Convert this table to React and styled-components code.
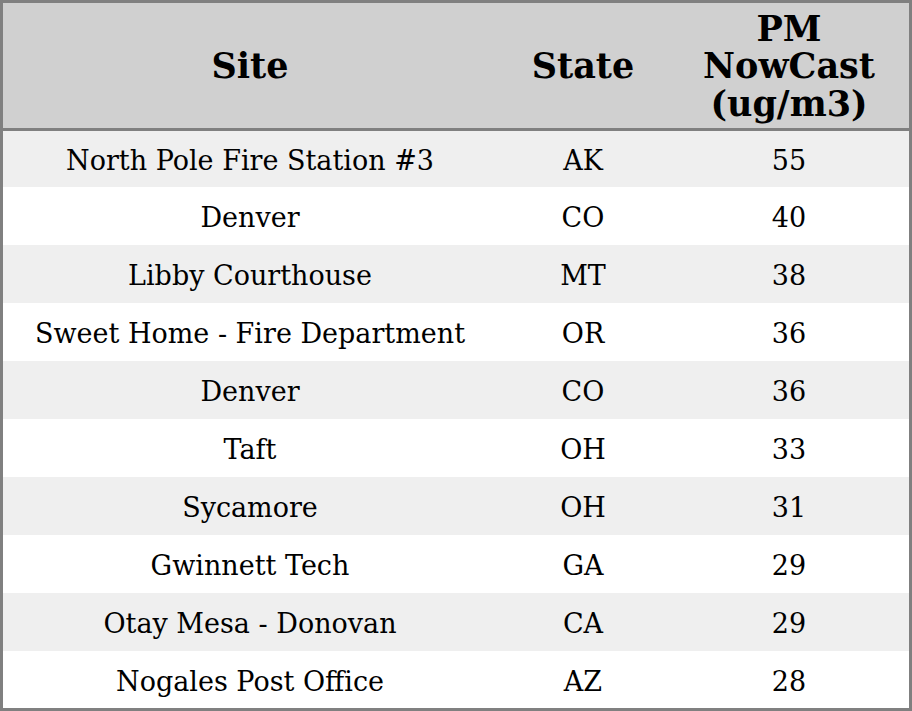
import React from "react";
import styled, { createGlobalStyle } from "styled-components";

const Global = createGlobalStyle`
  html, body { margin: 0; padding: 0; background: #ffffff; }
  body { font-family: "DejaVu Serif", serif; }
`;

const Table = styled.table`
  width: 912px;
  border-collapse: separate;
  border-spacing: 0;
  border: 3px solid #808080;
  box-sizing: border-box;
  font-family: "DejaVu Serif", serif;
  color: #000;
  table-layout: fixed;
`;

const HeadCell = styled.th`
  background: #d0d0d0;
  height: 124px;
  padding: 1px 0 0;
  font-size: 35px;
  font-weight: bold;
  line-height: 37.5px;
  text-align: center;
  vertical-align: middle;
  border-bottom: 3px solid #808080;
  width: ${(p) => p.$w}px;
`;

const Row = styled.tr`
  background: ${(p) => (p.$alt ? "#efefef" : "#ffffff")};
`;

const Cell = styled.td`
  height: ${(p) => p.$h - 4}px;
  padding: 4px 0 0;
  font-size: 27px;
  line-height: 32px;
  text-align: center;
  vertical-align: middle;
`;

const data = [
  ["North Pole Fire Station #3", "AK", 55],
  ["Denver", "CO", 40],
  ["Libby Courthouse", "MT", 38],
  ["Sweet Home - Fire Department", "OR", 36],
  ["Denver", "CO", 36],
  ["Taft", "OH", 33],
  ["Sycamore", "OH", 31],
  ["Gwinnett Tech", "GA", 29],
  ["Otay Mesa - Donovan", "CA", 29],
  ["Nogales Post Office", "AZ", 28],
];

export default function App() {
  return (
    <>
      <Global />
      <Table>
        <thead>
          <tr>
            <HeadCell $w={494}>Site</HeadCell>
            <HeadCell $w={172}>State</HeadCell>
            <HeadCell $w={240}>
              PM
              <br />
              NowCast
              <br />
              (ug/m3)
            </HeadCell>
          </tr>
        </thead>
        <tbody>
          {data.map(([site, st, v], i) => {
            const h = i === 0 ? 56 : i === data.length - 1 ? 57 : 58;
            return (
              <Row key={i} $alt={i % 2 === 0}>
                <Cell $h={h}>{site}</Cell>
                <Cell $h={h}>{st}</Cell>
                <Cell $h={h}>{v}</Cell>
              </Row>
            );
          })}
        </tbody>
      </Table>
    </>
  );
}
